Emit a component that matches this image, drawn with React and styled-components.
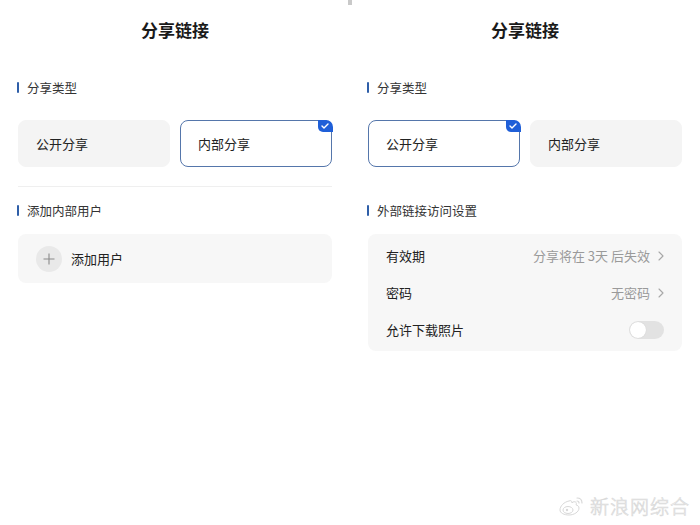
import React from 'react';
import styled, { createGlobalStyle } from 'styled-components';

const GlobalStyle = createGlobalStyle`
  html, body {
    margin: 0;
    padding: 0;
    background: #ffffff;
  }
  body {
    font-family: "Noto Sans CJK SC", "Noto Sans", sans-serif;
    color: #222;
  }
`;

const Page = styled.div`
  position: relative;
  width: 700px;
  height: 525px;
  display: grid;
  grid-template-columns: 350px 350px;
  overflow: hidden;
`;

const Panel = styled.div`
  padding: 0 18px;
  display: flex;
  flex-direction: column;
`;

const Title = styled.div`
  height: 60px;
  line-height: 60px;
  text-align: center;
  font-size: 17px;
  font-weight: 700;
  color: #1a1a1a;
`;

const SectionHeader = styled.div`
  margin-top: ${(p) => p.$top}px;
  height: 24px;
  display: flex;
  align-items: center;
  gap: 8px;
  font-size: 12.5px;
  color: #333;

  &::before {
    content: '';
    width: 2px;
    height: 11px;
    margin-left: -1px;
    background: #2e5ea8;
    border-radius: 1px;
  }
`;

const TypeRow = styled.div`
  margin-top: 21px;
  display: grid;
  grid-template-columns: 1fr 1fr;
  gap: 10px;
`;

const TypeCard = styled.div`
  position: relative;
  height: 47px;
  box-sizing: border-box;
  border-radius: 8px;
  display: flex;
  align-items: center;
  padding-left: 17px;
  font-size: 13px;
  color: #222;
  background: ${(p) => (p.$active ? '#ffffff' : '#f4f4f4')};
  border: 1.5px solid ${(p) => (p.$active ? '#5576ab' : '#f4f4f4')};
`;

const CheckBadge = styled.div`
  position: absolute;
  top: -1.5px;
  right: -1.5px;
  width: 15px;
  height: 12px;
  background: #1f5fd8;
  border-radius: 0 7px 0 5px;
  display: flex;
  align-items: center;
  justify-content: center;
`;

const Divider = styled.div`
  margin-top: 19px;
  height: 1px;
  background: ${(p) => (p.$hidden ? 'transparent' : '#efefef')};
`;

const GreyCard = styled.div`
  margin-top: 12px;
  background: #f7f7f7;
  border-radius: 8px;
  box-sizing: border-box;
`;

const AddUser = styled(GreyCard)`
  height: 49px;
  display: flex;
  align-items: center;
  padding-left: 18px;
  gap: 9px;
  font-size: 13px;
  color: #222;
`;

const PlusCircle = styled.div`
  width: 26px;
  height: 26px;
  border-radius: 50%;
  background: #e9e9e9;
  display: flex;
  align-items: center;
  justify-content: center;
`;

const Settings = styled(GreyCard)`
  padding: 3px 18px;
`;

const SettingRow = styled.div`
  height: 37px;
  display: flex;
  align-items: center;
  justify-content: space-between;
  font-size: 13px;
  color: #222;
`;

const Value = styled.div`
  display: flex;
  align-items: center;
  gap: 8px;
  font-size: 13px;
  color: #9a9a9a;
`;

const Toggle = styled.div`
  width: 35px;
  height: 18px;
  border-radius: 9px;
  background: #e2e2e2;
  position: relative;

  &::after {
    content: '';
    position: absolute;
    left: 1px;
    top: 1px;
    width: 16px;
    height: 16px;
    border-radius: 50%;
    background: #ffffff;
    box-shadow: 0 0 1px rgba(0, 0, 0, 0.15);
  }
`;

const TopMark = styled.div`
  position: absolute;
  left: 348px;
  top: 0;
  width: 4px;
  height: 5px;
  background: #c9c9c9;
`;

const Watermark = styled.div`
  position: absolute;
  right: 10px;
  bottom: 6px;
  display: flex;
  align-items: center;
  gap: 4px;
  font-size: 19px;
  font-weight: 300;
  letter-spacing: 1px;
  color: #ffffff;
  -webkit-text-stroke: 0.7px #dadada;
`;

const Chevron = () => (
  <svg width="6" height="10" viewBox="0 0 6 10">
    <path d="M1 1l4 4-4 4" fill="none" stroke="#a8a8a8" strokeWidth="1.1" strokeLinecap="round" strokeLinejoin="round" />
  </svg>
);

const Check = () => (
  <svg width="8" height="6" viewBox="0 0 8 6">
    <path d="M1 3l2 2 4-4" fill="none" stroke="#fff" strokeWidth="1.4" strokeLinecap="round" strokeLinejoin="round" />
  </svg>
);

const WeiboLogo = () => (
  <svg width="28" height="22" viewBox="0 0 28 22">
    <path d="M11 6c-5 1-9 5-9 9 0 3 4 5 9 5s10-3 10-7c0-2-2-3-3-3 1-2 0-4-3-3l-1 1c0-2-1-3-3-2z" fill="#fff" stroke="#d8d8d8" strokeWidth="1" />
    <ellipse cx="10" cy="15" rx="5" ry="3.5" fill="none" stroke="#d8d8d8" strokeWidth="1" />
    <circle cx="9" cy="15" r="1.2" fill="#d8d8d8" />
    <path d="M19 3c3 0 5 2 5 5M19 6c1.2 0 2 .8 2 2" fill="none" stroke="#d8d8d8" strokeWidth="1.2" strokeLinecap="round" />
  </svg>
);

const ShareType = ({ active }) => (
  <TypeRow>
    <TypeCard $active={active === 'public'}>
      公开分享
      {active === 'public' && <CheckBadge><Check /></CheckBadge>}
    </TypeCard>
    <TypeCard $active={active === 'internal'}>
      内部分享
      {active === 'internal' && <CheckBadge><Check /></CheckBadge>}
    </TypeCard>
  </TypeRow>
);

export default function App() {
  return (
    <Page>
      <GlobalStyle />
      <Panel>
        <Title>分享链接</Title>
        <SectionHeader $top={15}>分享类型</SectionHeader>
        <ShareType active="internal" />
        <Divider />
        <SectionHeader $top={11}>添加内部用户</SectionHeader>
        <AddUser>
          <PlusCircle>
            <svg width="12" height="12" viewBox="0 0 12 12">
              <path d="M6 0.5v11M0.5 6h11" stroke="#8a8a8a" strokeWidth="1.1" />
            </svg>
          </PlusCircle>
          添加用户
        </AddUser>
      </Panel>
      <Panel>
        <Title>分享链接</Title>
        <SectionHeader $top={15}>分享类型</SectionHeader>
        <ShareType active="public" />
        <Divider $hidden />
        <SectionHeader $top={11}>外部链接访问设置</SectionHeader>
        <Settings>
          <SettingRow>
            有效期
            <Value>分享将在 3天 后失效 <Chevron /></Value>
          </SettingRow>
          <SettingRow>
            密码
            <Value>无密码 <Chevron /></Value>
          </SettingRow>
          <SettingRow>
            允许下载照片
            <Toggle />
          </SettingRow>
        </Settings>
      </Panel>
      <TopMark />
      <Watermark>
        <WeiboLogo />
        新浪网综合
      </Watermark>
    </Page>
  );
}
